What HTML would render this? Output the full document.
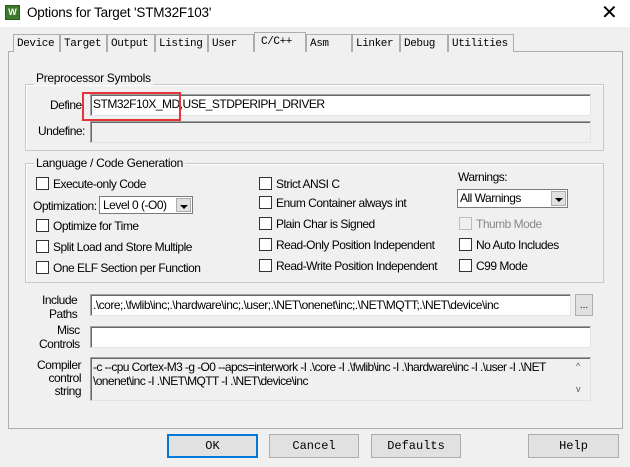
<!DOCTYPE html>
<html><head><style>
*{box-sizing:border-box;margin:0;padding:0}
body{width:630px;height:467px;background:#f0f0f0;font-family:"Liberation Sans",Arial,sans-serif;font-size:12px;color:#000;position:relative;overflow:hidden}
.a{position:absolute;white-space:nowrap}
.title{left:0;top:0;width:630px;height:27px;background:#fff}
.tab{position:absolute;top:34px;height:18px;border:1px solid #adadad;border-bottom:none;background:#f0f0f0;font-family:"Liberation Mono",monospace;font-size:11px;padding:3px 0 0 3px;letter-spacing:-0.4px}
.grp{position:absolute;border:1px solid #c8c8c8;box-shadow:inset 1px 1px 0 #fff}
.gl{position:absolute;background:#f0f0f0;padding:0 2px;letter-spacing:-0.3px}
.in{position:absolute;background:#fff;border:1px solid #a0a0a0;border-right-color:#e3e3e3;border-bottom-color:#e3e3e3;box-shadow:inset 1px 1px 0 #696969;padding:2px 0 0 2px}
.cb{position:absolute;width:13px;height:13px;border:1px solid #333;background:#fff}
.lb{position:absolute;white-space:nowrap;letter-spacing:-0.5px}
.btn{position:absolute;top:434px;height:24px;border:1px solid #adadad;background:#e1e1e1;font-family:"Liberation Mono",monospace;font-size:12px;text-align:center;line-height:22px}
.sel{position:absolute;background:#fff;border:1px solid #7a7a7a;padding:1px 0 0 3px;letter-spacing:-0.5px}
.arr{position:absolute;right:1px;top:1px;width:15px;bottom:1px;background:#e1e1e1;border:1px solid #adadad}
.arr:after{content:"";position:absolute;left:3px;top:6px;border:4px solid transparent;border-top:4px solid #000;border-bottom:none}
</style></head><body>
<div class="a title"></div>
<div class="a" style="left:5px;top:5px;width:15px;height:15px;background:#3d7a2c;border:1px solid #2a5a1e"><div style="color:#fff;font-size:9px;font-weight:bold;line-height:13px;text-align:center">W</div></div>
<div class="a" style="left:27px;top:5px;font-size:13.5px;letter-spacing:-0.2px">Options for Target 'STM32F103'</div>
<div class="a" style="left:601px;top:0px;font-size:20px;font-weight:300">✕</div>
<div class="a" style="left:8px;top:51px;width:615px;height:378px;border:1px solid #adadad;background:#f0f0f0"></div>
<div class="tab" style="left:13px;width:47px">Device</div>
<div class="tab" style="left:60px;width:47px">Target</div>
<div class="tab" style="left:107px;width:48px">Output</div>
<div class="tab" style="left:155px;width:53px">Listing</div>
<div class="tab" style="left:208px;width:46px">User</div>
<div class="tab" style="left:254px;top:32px;height:20px;width:52px;background:#f0f0f0;padding-left:6px">C/C++</div>
<div class="tab" style="left:306px;width:46px">Asm</div>
<div class="tab" style="left:352px;width:48px">Linker</div>
<div class="tab" style="left:400px;width:48px">Debug</div>
<div class="tab" style="left:448px;width:66px">Utilities</div>
<div class="a" style="left:255px;top:51px;width:50px;height:2px;background:#f0f0f0"></div>

<div class="grp" style="left:25px;top:84px;width:579px;height:67px"></div>
<div class="gl" style="left:34px;top:71px">Preprocessor Symbols</div>
<div class="lb" style="left:50px;top:98px">Define</div>
<div class="in" style="left:90px;top:94px;width:501px;height:22px;letter-spacing:-0.5px">STM32F10X_MD,USE_STDPERIPH_DRIVER</div>
<div class="a" style="left:82px;top:92px;width:99px;height:29px;border:2px solid #e8333a"></div>
<div class="lb" style="left:38px;top:124px">Undefine:</div>
<div class="in" style="left:90px;top:121px;width:501px;height:22px;background:#f0f0f0"></div>

<div class="grp" style="left:25px;top:163px;width:579px;height:120px"></div>
<div class="gl" style="left:34px;top:156px">Language / Code Generation</div>
<div class="cb" style="left:36px;top:177px"></div><div class="lb" style="left:53px;top:177px">Execute-only Code</div>
<div class="lb" style="left:33px;top:199px">Optimization:</div>
<div class="sel" style="left:99px;top:196px;width:94px;height:18px">Level 0 (-O0)<div class="arr"></div></div>
<div class="cb" style="left:36px;top:219px"></div><div class="lb" style="left:53px;top:219px">Optimize for Time</div>
<div class="cb" style="left:36px;top:240px"></div><div class="lb" style="left:53px;top:240px">Split Load and Store Multiple</div>
<div class="cb" style="left:36px;top:261px"></div><div class="lb" style="left:53px;top:261px">One ELF Section per Function</div>

<div class="cb" style="left:259px;top:177px"></div><div class="lb" style="left:276px;top:177px">Strict ANSI C</div>
<div class="cb" style="left:259px;top:196px"></div><div class="lb" style="left:276px;top:196px">Enum Container always int</div>
<div class="cb" style="left:259px;top:217px"></div><div class="lb" style="left:276px;top:217px">Plain Char is Signed</div>
<div class="cb" style="left:259px;top:238px"></div><div class="lb" style="left:276px;top:238px">Read-Only Position Independent</div>
<div class="cb" style="left:259px;top:259px"></div><div class="lb" style="left:276px;top:259px">Read-Write Position Independent</div>

<div class="lb" style="left:458px;top:170px">Warnings:</div>
<div class="sel" style="left:457px;top:189px;width:111px;height:19px;padding-left:2px">All Warnings<div class="arr"></div></div>
<div class="cb" style="left:459px;top:217px;border-color:#bcbcbc;background:#f0f0f0"></div><div class="lb" style="left:476px;top:217px;color:#8a8a8a">Thumb Mode</div>
<div class="cb" style="left:459px;top:238px"></div><div class="lb" style="left:476px;top:238px">No Auto Includes</div>
<div class="cb" style="left:459px;top:259px"></div><div class="lb" style="left:476px;top:259px">C99 Mode</div>

<div class="lb" style="left:42px;top:293px;text-align:right;line-height:14px">Include<br>&nbsp;&nbsp;Paths</div>
<div class="in" style="left:90px;top:294px;width:481px;height:22px;padding-top:3px;letter-spacing:-0.5px">.\core;.\fwlib\inc;.\hardware\inc;.\user;.\NET\onenet\inc;.\NET\MQTT;.\NET\device\inc</div>
<div class="a" style="left:575px;top:294px;width:18px;height:22px;background:#e1e1e1;border:1px solid #adadad;text-align:center;font-size:10px;line-height:22px">...</div>
<div class="lb" style="left:39px;top:323px;text-align:right;line-height:14px">&nbsp;&nbsp;&nbsp;Misc<br>Controls</div>
<div class="in" style="left:90px;top:326px;width:501px;height:22px"></div>
<div class="lb" style="left:37px;top:359px;text-align:right;line-height:13px">Compiler<br>&nbsp;&nbsp;control<br>&nbsp;&nbsp;&nbsp;&nbsp;string</div>
<div class="in" style="left:90px;top:357px;width:501px;height:44px;background:#f0f0f0;line-height:14px;letter-spacing:-0.6px;white-space:nowrap">-c --cpu Cortex-M3 -g -O0 --apcs=interwork -I .\core -I .\fwlib\inc -I .\hardware\inc -I .\user -I .\NET<br>\onenet\inc -I .\NET\MQTT -I .\NET\device\inc</div>
<div class="a" style="left:576px;top:361px;font-size:9px;color:#555">^</div>
<div class="a" style="left:576px;top:384px;font-size:9px;color:#555">v</div>

<div class="btn" style="left:167px;width:91px;border:2px solid #0078d7;line-height:20px">OK</div>
<div class="btn" style="left:269px;width:90px">Cancel</div>
<div class="btn" style="left:371px;width:90px">Defaults</div>
<div class="btn" style="left:528px;width:91px">Help</div>
</body></html>
